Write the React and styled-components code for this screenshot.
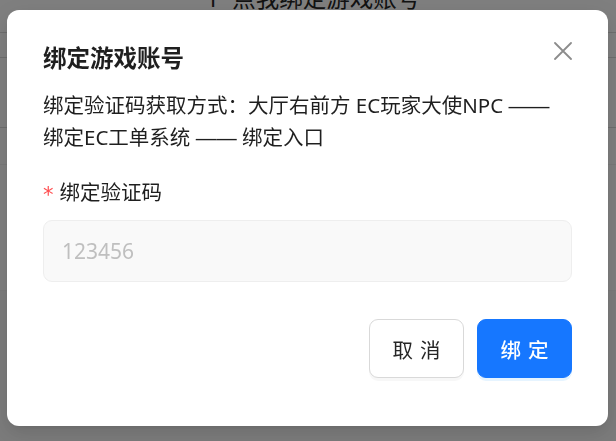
import React from "react";
import styled, { createGlobalStyle } from "styled-components";

const GlobalStyle = createGlobalStyle`
  html, body {
    margin: 0;
    padding: 0;
    background: #ffffff;
  }
  body {
    font-family: "Noto Sans", "Noto Sans CJK SC", sans-serif;
    overflow: hidden;
  }
`;

/* ---- page behind the dialog ---- */
const Page = styled.div`
  width: 616px;
  height: 441px;
  overflow: hidden;
  display: flex;
  flex-direction: column;
`;

const StepRow = styled.div`
  height: 50px;
  margin-top: -18px;
  display: flex;
  justify-content: center;
  align-items: flex-start;
  gap: 13px;
  padding-left: 10px;
  border-bottom: 1px solid #dcdcdc;
  font-size: 23.5px;
  line-height: 32px;
  color: #262626;
`;

const TableRow = styled.div`
  height: ${(p) => p.$h}px;
  flex-shrink: 0;
  border-bottom: 1px solid ${(p) => p.$line || "#dcdcdc"};
  background: ${(p) => p.$bg || "#ffffff"};
`;

const Rest = styled.div`
  flex: 1;
  background: #f8f8f8;
`;

/* ---- dialog ---- */
const Mask = styled.div`
  position: fixed;
  inset: 0;
  background: rgba(0, 0, 0, 0.5);
  display: flex;
  justify-content: center;
  align-items: flex-start;
  padding-top: 10px;
`;

const Dialog = styled.div`
  width: 601px;
  margin-right: 1px;
  box-sizing: border-box;
  background: #ffffff;
  border-radius: 12px;
  padding: 31px 36px 48px 36px;
  box-shadow: 0 9px 28px 8px rgba(0, 0, 0, 0.05),
    0 6px 16px 0 rgba(0, 0, 0, 0.08), 0 3px 6px -4px rgba(0, 0, 0, 0.12);
  font-family: "Noto Sans", "Noto Sans CJK SC", sans-serif;
  color: #1f1f1f;
`;

const Header = styled.div`
  display: flex;
  justify-content: space-between;
  align-items: flex-start;
`;

const Title = styled.h2`
  margin: 0;
  font-size: 23.5px;
  line-height: 35px;
  font-weight: 700;
  color: #1f1f1f;
`;

const CloseButton = styled.button`
  margin: 0.5px 0 0 0;
  padding: 0;
  width: 18px;
  height: 18px;
  border: none;
  background: transparent;
  cursor: pointer;
  display: flex;
  svg {
    display: block;
  }
`;

const Description = styled.p`
  margin: 13px 0 0 0;
  font-size: 20.5px;
  line-height: 32px;
  color: #1f1f1f;
`;

const Dash = styled.span`
  font-family: "Liberation Sans", sans-serif;
  line-height: 0;
`;

const Field = styled.div`
  margin-top: 23px;
  display: flex;
  flex-direction: column;
  gap: 12px;
`;

const Label = styled.label`
  display: flex;
  align-items: center;
  height: 32px;
  font-size: 20.5px;
  line-height: 32px;
  color: #1f1f1f;
`;

const Required = styled.span`
  color: #ff4d4f;
  font-family: "DejaVu Sans", sans-serif;
  font-size: 21px;
  line-height: 1;
  margin-right: 6px;
  padding-top: 6px;
`;

const Input = styled.input`
  box-sizing: border-box;
  width: 100%;
  height: 62px;
  border: 1px solid #eeeeee;
  border-radius: 9px;
  background: #f9f9f9;
  padding: 0 18px;
  font-family: "Noto Sans", "Noto Sans CJK SC", sans-serif;
  font-size: 21px;
  color: #1f1f1f;
  outline: none;
  &::placeholder {
    color: #bfbfbf;
  }
`;

const Footer = styled.div`
  margin-top: 37px;
  display: flex;
  justify-content: flex-end;
  gap: 13px;
`;

const Button = styled.button`
  width: 95px;
  height: 59px;
  box-sizing: border-box;
  border-radius: 9px;
  font-family: "Noto Sans", "Noto Sans CJK SC", sans-serif;
  font-size: 20.5px;
  letter-spacing: 0.34em;
  text-indent: 0.34em;
  cursor: pointer;
  border: 1px solid ${(p) => (p.$primary ? "#1677ff" : "#d9d9d9")};
  background: ${(p) => (p.$primary ? "#1677ff" : "#ffffff")};
  color: ${(p) => (p.$primary ? "#ffffff" : "#262626")};
  font-weight: ${(p) => (p.$primary ? 500 : 400)};
  box-shadow: ${(p) =>
    p.$primary ? "0 3px 0 rgba(5, 145, 255, 0.1)" : "0 3px 0 rgba(0, 0, 0, 0.03)"};
`;

const CloseIcon = () => (
  <svg width="18" height="18" viewBox="0 0 18 18" fill="none">
    <path
      d="M1 1 L17 17 M17 1 L1 17"
      stroke="#8c8c8c"
      strokeWidth="1.8"
      strokeLinecap="round"
    />
  </svg>
);

const App = () => {
  return (
    <>
      <GlobalStyle />
      <Page>
        <StepRow>
          <span>1</span>
          <span>点我绑定游戏账号</span>
        </StepRow>
        <TableRow $h={24} />
        <TableRow $h={69} />
        <TableRow $h={36} $line="#f2f2f2" />
        <TableRow $h={125} $line="#f4f4f4" />
        <Rest />
      </Page>
      <Mask>
        <Dialog role="dialog">
          <Header>
            <Title>绑定游戏账号</Title>
            <CloseButton aria-label="关闭">
              <CloseIcon />
            </CloseButton>
          </Header>
          <Description>
            绑定验证码获取方式：大厅右前方 EC玩家大使NPC <Dash>——</Dash>
            <br />
            绑定EC工单系统 <Dash>——</Dash> 绑定入口
          </Description>
          <Field>
            <Label>
              <Required>*</Required>
              绑定验证码
            </Label>
            <Input placeholder="123456" />
          </Field>
          <Footer>
            <Button>取消</Button>
            <Button $primary>绑定</Button>
          </Footer>
        </Dialog>
      </Mask>
    </>
  );
};

export default App;
